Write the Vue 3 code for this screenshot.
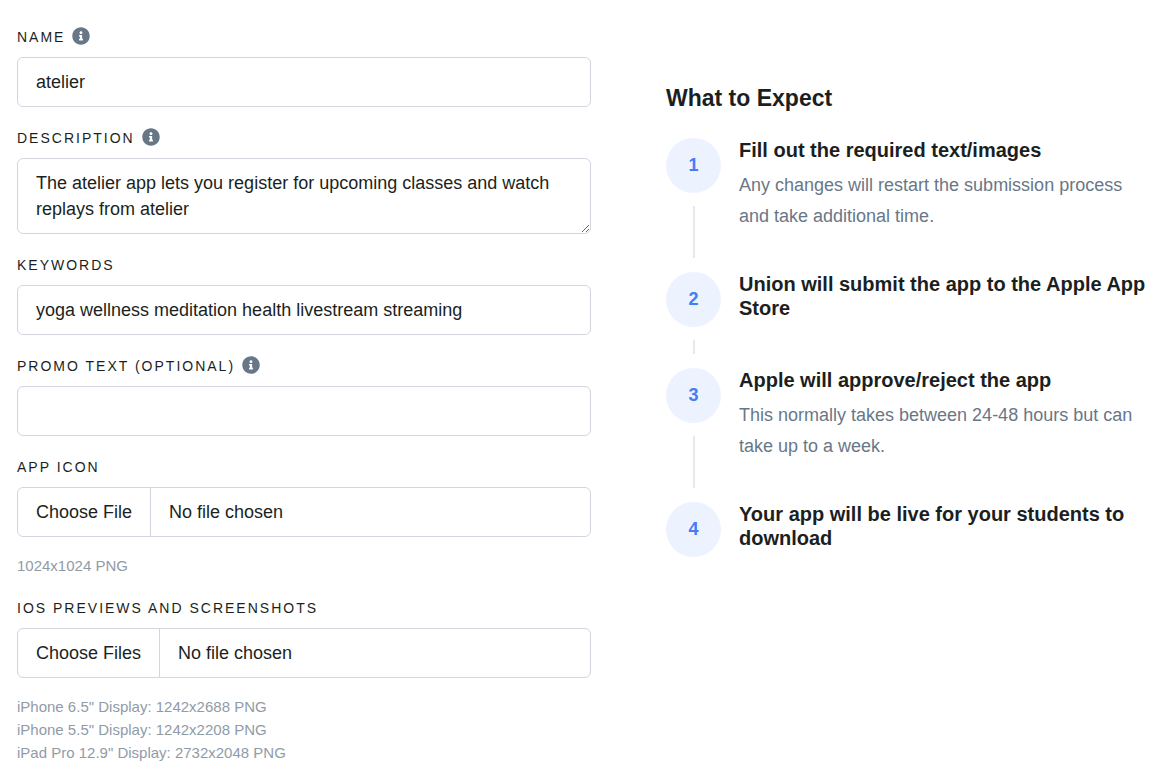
<script setup>
import { ref } from 'vue'

const name = ref('atelier')
const description = ref('The atelier app lets you register for upcoming classes and watch replays from atelier')
const keywords = ref('yoga wellness meditation health livestream streaming')
const promo = ref('')

const fields = [
  { id: 'name', label: 'Name', info: true, type: 'text', model: name },
  { id: 'description', label: 'Description', info: true, type: 'area', model: description },
  { id: 'keywords', label: 'Keywords', type: 'text', model: keywords },
  { id: 'promo', label: 'Promo text (optional)', info: true, type: 'text', model: promo },
  { id: 'icon', label: 'App icon', type: 'file', hints: ['1024x1024 PNG'] },
  {
    id: 'previews',
    label: 'iOS previews and screenshots',
    type: 'file',
    multiple: true,
    hints: [
      'iPhone 6.5" Display: 1242x2688 PNG',
      'iPhone 5.5" Display: 1242x2208 PNG',
      'iPad Pro 12.9" Display: 2732x2048 PNG',
    ],
  },
]

const steps = [
  { title: 'Fill out the required text/images', text: 'Any changes will restart the submission process and take additional time.' },
  { title: 'Union will submit the app to the Apple App Store' },
  { title: 'Apple will approve/reject the app', text: 'This normally takes between 24-48 hours but can take up to a week.' },
  { title: 'Your app will be live for your students to download' },
]
</script>

<template>
  <main class="page">
    <form class="form" @submit.prevent>
      <div v-for="f in fields" :key="f.id" class="field">
        <div class="label-row">
          <label :for="f.id">{{ f.label }}</label>
          <svg v-if="f.info" class="info" viewBox="0 0 512 512" aria-hidden="true">
            <path fill="currentColor" d="M256 8C119 8 8 119 8 256s111 248 248 248 248-111 248-248S393 8 256 8zm0 110c23.200 0 42 18.800 42 42s-18.800 42-42 42-42-18.800-42-42 18.800-42 42-42zm56 254c0 6.600-5.400 12-12 12h-88c-6.600 0-12-5.400-12-12v-24c0-6.600 5.400-12 12-12h12v-64h-12c-6.600 0-12-5.400-12-12v-24c0-6.600 5.400-12 12-12h64c6.600 0 12 5.400 12 12v100h12c6.600 0 12 5.400 12 12v24z" />
          </svg>
        </div>
        <textarea v-if="f.type === 'area'" :id="f.id" v-model="f.model.value" class="control area" rows="2"></textarea>
        <input v-else-if="f.type === 'file'" :id="f.id" class="control file" type="file" :multiple="f.multiple" />
        <input v-else :id="f.id" v-model="f.model.value" class="control" type="text" />
        <p v-if="f.hints" class="hints">
          <span v-for="h in f.hints" :key="h">{{ h }}</span>
        </p>
      </div>
    </form>

    <section class="expect">
      <h2>What to Expect</h2>
      <ol class="steps">
        <li v-for="(s, i) in steps" :key="s.title" class="step">
          <div class="rail">
            <span class="circle">{{ i + 1 }}</span>
          </div>
          <div class="body">
            <h3>{{ s.title }}</h3>
            <p v-if="s.text">{{ s.text }}</p>
          </div>
        </li>
      </ol>
    </section>
  </main>
</template>

<style>
body {
  background: #fff;
}
</style>

<style scoped>
.page {
  display: grid;
  grid-template-columns: 574fr 482fr;
  column-gap: 75px;
  align-items: start;
  padding: 25px 25px 0 17px;
  color: #1b1f22;
  font-family: "Liberation Sans", Arial, sans-serif;
  font-size: 18px;
}
.form {
  display: flex;
  flex-direction: column;
  gap: 19px;
}
.field {
  display: flex;
  flex-direction: column;
}
.label-row {
  display: flex;
  align-items: center;
  gap: 7px;
  height: 24px;
  margin-bottom: 8px;
}
label {
  font-size: 14px;
  letter-spacing: 2px;
  line-height: 24px;
  text-transform: uppercase;
}
.info {
  width: 18px;
  height: 18px;
  margin-bottom: 2px;
  color: #687788;
}
.control {
  box-sizing: border-box;
  width: 100%;
  height: 50px;
  margin: 0;
  padding: 0 18px;
  border: 1px solid #d3d5df;
  border-radius: 6px;
  background: #fff;
  color: inherit;
  font-family: inherit;
  font-size: 18px;
  line-height: 26px;
  outline: none;
}
.control:focus {
  border-color: #467bf5;
}
.area {
  display: block;
  height: 76px;
  padding: 11px 18px;
  resize: vertical;
  overflow: hidden;
}
.file {
  padding: 0;
  line-height: 48px;
  overflow: hidden;
}
.file::file-selector-button {
  height: 48px;
  margin: 0 18px 0 0;
  padding: 0 18px;
  border: 0;
  border-right: 1px solid #d3d5df;
  background: transparent;
  color: inherit;
  font: inherit;
}
.hints {
  display: flex;
  flex-direction: column;
  margin: 17px 0 0;
  color: #909ba8;
  font-size: 15px;
  line-height: 23px;
}
.expect {
  padding-top: 59px;
}
h2 {
  margin: 0 0 26px;
  font-size: 23px;
  line-height: 28px;
}
.steps {
  margin: 0;
  padding: 0;
  list-style: none;
}
.step {
  display: flex;
  gap: 18px;
}
.rail {
  display: flex;
  flex-direction: column;
  align-items: center;
  flex: none;
  width: 55px;
}
.circle {
  display: grid;
  place-items: center;
  width: 55px;
  height: 55px;
  border-radius: 50%;
  background: #edf2ff;
  color: #467bf5;
  font-weight: 700;
}
.step:not(:last-child) .rail::after {
  content: "";
  flex: 1;
  width: 2px;
  margin: 13px 0 14px;
  background: #e6e8ed;
}
.body {
  padding-bottom: 40px;
}
h3 {
  margin: 0 0 8px;
  font-size: 20px;
  line-height: 24px;
}
.body p {
  margin: 0;
  color: #687788;
  line-height: 31px;
}
</style>
